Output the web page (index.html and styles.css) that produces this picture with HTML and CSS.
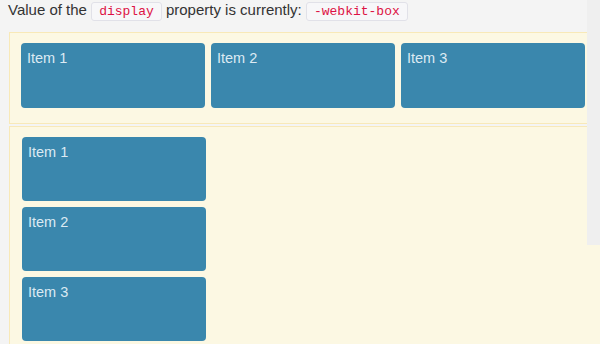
FILE: index.html
```html
<!DOCTYPE html>
<html lang="en">
<head>
  <meta charset="UTF-8">
  <title>Flexbox display value</title>
  <link rel="stylesheet" href="styles.css">
</head>
<body>

<p class="status">Value of the <code>display</code> property is currently: <code>-webkit-box</code></p>

<div class="box row">
  <div class="item">Item 1</div>
  <div class="item">Item 2</div>
  <div class="item">Item 3</div>
</div>

<div class="box column">
  <div class="item">Item 1</div>
  <div class="item">Item 2</div>
  <div class="item">Item 3</div>
</div>

<div class="scrollbar"></div>

</body>
</html>
```

FILE: styles.css
```css
body {
  margin: 0;
  padding: 0 0 0 8px;
  font-family: "Liberation Sans", Arial, sans-serif;
  font-size: 14.5px;
  color: #333;
  background-color: #f4f4f4;
  overflow: hidden;
}

.status {
  margin: 0 0 12px 0;
  height: 20px;
  line-height: 20px;
  font-size: 15px;
}

code {
  font-family: "Liberation Mono", "Courier New", monospace;
  font-size: 13px;
  color: #dd1144;
  background-color: #f7f7f9;
  border: 1px solid #e1e1e8;
  border-radius: 3px;
  padding: 1px 7px;
}

/* yellow containers */
.box {
  background-color: #fcf8e3;
  border: 1px solid #f8e9b8;
  margin-left: 1px;
  width: 620px;
}

.row {
  display: flex;
  gap: 6px;
  padding: 10px 0 15px 11px;
}

.column {
  display: flex;
  flex-direction: column;
  gap: 6px;
  margin-top: 2px;
  padding: 10px 0 10px 12px;
}

.item {
  width: 172px;
  height: 53px;
  padding: 6px 6px;
  background-color: #3a87ad;
  border-radius: 4px;
  color: #dceaf3;
  line-height: 18px;
  flex: none;
}

.column .item {
  height: 52px;
}

/* gray strip on the right edge */
.scrollbar {
  position: absolute;
  top: 0;
  right: 0;
  width: 13px;
  height: 245px;
  background-color: #efefef;
}
```
